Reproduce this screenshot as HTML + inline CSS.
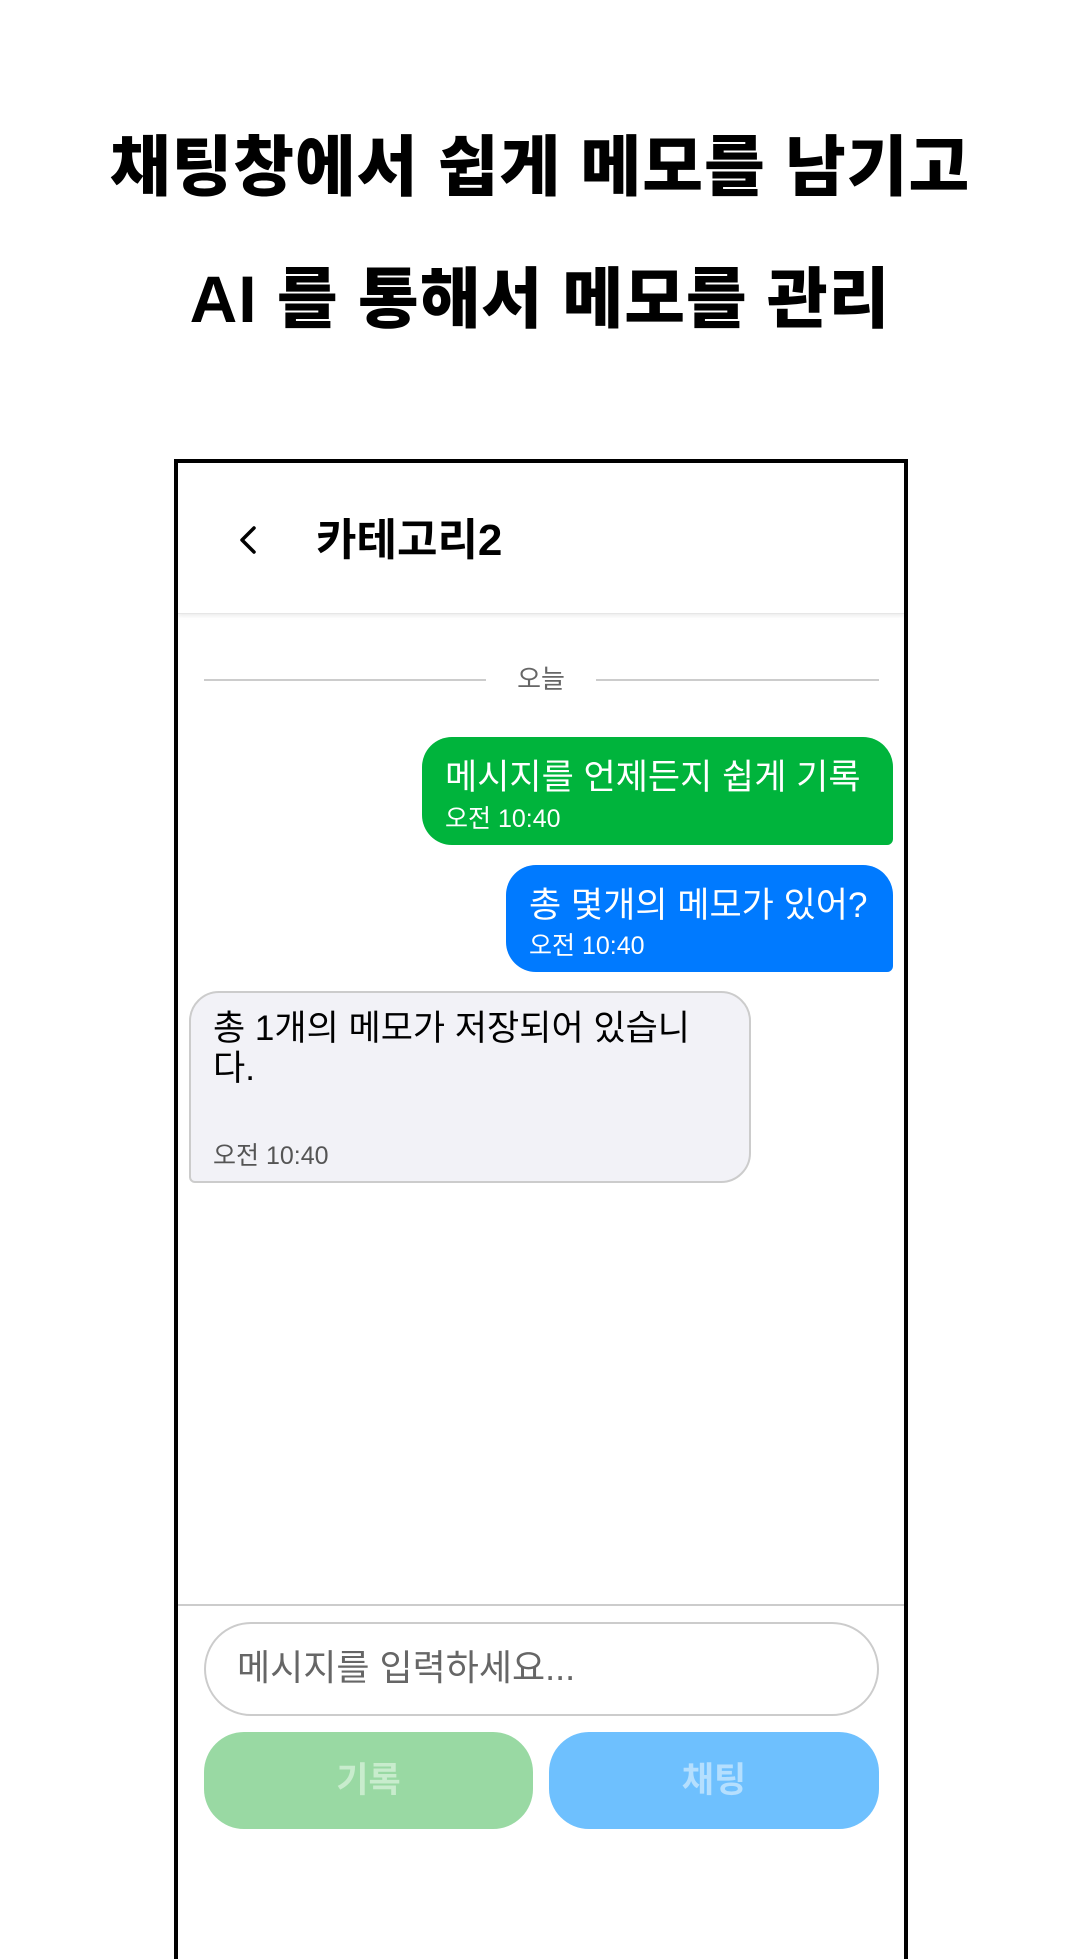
<!DOCTYPE html>
<html><head><meta charset="utf-8"><style>
*{margin:0;padding:0;box-sizing:border-box}
body{width:1080px;height:1920px;background:#fff;position:relative;overflow:hidden;font-family:"Liberation Sans","Noto Sans CJK KR",sans-serif}
.t{position:absolute;left:0;width:1080px;text-align:center;font-weight:900;font-size:66px;letter-spacing:1px;color:#000;line-height:1}
.frame{position:absolute;left:174px;top:459px;width:734px;height:1500px;border:4px solid #000;border-bottom:none}
.a{position:absolute}
.b{position:absolute;border-radius:30px;padding-left:22px}
</style></head><body>
<div class="t" style="top:134px">채팅창에서 쉽게 메모를 남기고</div>
<div class="t" style="top:266px">AI 를 통해서 메모를 관리</div>
<div class="frame"></div>
<div class="a" style="left:178px;top:463px;width:726px;height:151px;box-shadow:0 2px 4px rgba(0,0,0,0.08);border-bottom:1px solid #e6e6e6"></div>
<svg class="a" style="left:236px;top:524px" width="24" height="32" viewBox="0 0 24 32"><path d="M18 4 L6 16 L18 28" fill="none" stroke="#000" stroke-width="3.5" stroke-linecap="round" stroke-linejoin="round"/></svg>
<div class="a" style="left:316px;top:516px;font-size:44px;font-weight:700;line-height:50px">카테고리2</div>
<div class="a" style="left:204px;top:679px;width:282px;height:2px;background:#ccc"></div>
<div class="a" style="left:596px;top:679px;width:283px;height:2px;background:#ccc"></div>
<div class="a" style="left:486px;top:663px;width:110px;text-align:center;font-size:26px;color:#666;line-height:32px">오늘</div>
<div class="b" style="left:422px;top:737px;width:471px;height:108px;background:#00b43c;border-bottom-right-radius:6px;color:#fff">
<div style="font-size:35px;position:absolute;top:12px;left:23px;white-space:nowrap">메시지를 언제든지 쉽게 기록</div>
<div style="font-size:25px;position:absolute;top:62px;left:23px">오전 10:40</div></div>
<div class="b" style="left:506px;top:865px;width:387px;height:107px;background:#007aff;border-bottom-right-radius:6px;color:#fff">
<div style="font-size:35px;position:absolute;top:12px;left:23px;white-space:nowrap">총 몇개의 메모가 있어?</div>
<div style="font-size:25px;position:absolute;top:61px;left:23px">오전 10:40</div></div>
<div class="b" style="left:189px;top:991px;width:562px;height:192px;background:#f2f2f7;border:2px solid #ccc;border-bottom-left-radius:6px;color:#000">
<div style="font-size:35px;position:absolute;top:16px;left:22px;line-height:40px;width:520px">총 1개의 메모가 저장되어 있습니<br>다.</div>
<div style="font-size:25px;position:absolute;top:143px;left:22px;color:#555">오전 10:40</div></div>
<div class="a" style="left:178px;top:1604px;width:726px;height:2px;background:#ccc"></div>
<div class="a" style="left:204px;top:1622px;width:675px;height:94px;border:2px solid #ccc;border-radius:47px"></div>
<div class="a" style="left:237px;top:1647px;font-size:36px;color:#666;line-height:42px">메시지를 입력하세요...</div>
<div class="a" style="left:204px;top:1732px;width:329px;height:97px;background:#99d9a3;border-radius:40px;color:#c8eccd;font-size:35px;font-weight:700;text-align:center;line-height:97px">기록</div>
<div class="a" style="left:549px;top:1732px;width:330px;height:97px;background:#6ec0fe;border-radius:40px;color:#b5dffe;font-size:35px;font-weight:700;text-align:center;line-height:97px">채팅</div>
</body></html>
